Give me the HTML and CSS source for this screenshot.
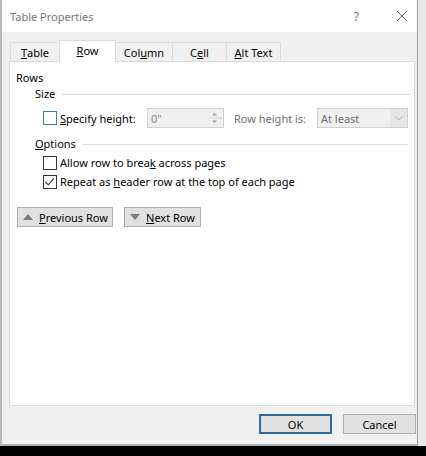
FILE: index.html
```html
<!DOCTYPE html>
<html>
<head>
<meta charset="utf-8">
<link rel="stylesheet" href="styles.css">
</head>
<body>
<div class="screen">
  <div class="window">
    <div class="titlebar">
      <span class="title">Table Properties</span>
      <div class="controls">
        <span class="help">?</span>
        <svg class="close" width="12" height="12" viewBox="0 0 12 12"><path d="M1 1L11 11M11 1L1 11" stroke="#666" stroke-width="1" fill="none"/></svg>
      </div>
    </div>
    <div class="body">
      <div class="tabs">
        <div class="tab"><u>T</u>able</div>
        <div class="tab active"><u>R</u>ow</div>
        <div class="tab">Col<u>u</u>mn</div>
        <div class="tab">C<u>e</u>ll</div>
        <div class="tab"><u>A</u>lt Text</div>
      </div>
      <div class="panel">
        <div class="heading">Rows</div>
        <div class="group">
          <div class="legend"><span>Size</span><div class="rule"></div></div>
          <div class="sizerow">
            <label class="check"><span class="box blue"></span><span><u>S</u>pecify height:</span></label>
            <div class="spin">
              <span class="spinval">0"</span>
              <div class="spinbtns">
                <svg width="17" height="18" viewBox="0 0 17 18"><path d="M6 6.5L8.5 4L11 6.5Z" fill="#9a9a9a"/><path d="M1 9H16" stroke="#d6d6d6"/><path d="M6 11.5L8.5 14L11 11.5Z" fill="#9a9a9a"/></svg>
              </div>
            </div>
            <span class="label2">Row height is:</span>
            <div class="select">
              <span class="selval">At least</span>
              <div class="selbtn"><svg width="10" height="6" viewBox="0 0 10 6"><path d="M1 1L5 5L9 1" stroke="#b5b5b5" fill="none"/></svg></div>
            </div>
          </div>
          <div class="legend opts"><span><u>O</u>ptions</span><div class="rule"></div></div>
          <label class="check opt"><span class="box"></span><span>Allow row to brea<u>k</u> across pages</span></label>
          <label class="check opt"><span class="box"><svg width="12" height="12" viewBox="0 0 12 12"><path d="M1.5 6L4.3 8.8L10 2.3" stroke="#333" stroke-width="1.1" fill="none"/></svg></span><span>Repeat as <u>h</u>eader row at the top of each page</span></label>
        </div>
        <div class="navrow">
          <div class="navbtn prev"><svg width="10" height="6" viewBox="0 0 10 6"><path d="M0 6L5 0L10 6Z" fill="#7a7a7a"/></svg><span><u>P</u>revious Row</span></div>
          <div class="navbtn next"><svg width="10" height="6" viewBox="0 0 10 6"><path d="M0 0L5 6L10 0Z" fill="#7a7a7a"/></svg><span><u>N</u>ext Row</span></div>
        </div>
      </div>
      <div class="footer">
        <div class="btn ok">OK</div>
        <div class="btn">Cancel</div>
      </div>
    </div>
  </div>
</div>
</body>
</html>
```
FILE: styles.css
```css
html, body {
  margin: 0;
  padding: 0;
  background: #000;
}
body {
  font-family: "Noto Sans", "Open Sans", sans-serif;
  font-size: 11px;
  color: #000;
  white-space: nowrap;
}
.screen {
  width: 426px;
  height: 446px;
  background: #e9e9e9;
}
.window {
  width: 415px;
  height: 444px;
  border-left: 2px solid #b9b9b9;
  border-right: 1px solid #9d9d9d;
  border-bottom: 2px solid #b3b3b3;
  background: #f0f0f0;
  display: flex;
  flex-direction: column;
}
.titlebar {
  height: 32px;
  background: #fff;
  display: flex;
  align-items: center;
  justify-content: space-between;
  padding-left: 8px;
}
.title {
  color: #777;
  font-size: 11px;
}
.controls {
  display: flex;
  align-items: center;
}
.help {
  color: #777;
  font-size: 12px;
  margin-right: 37px;
}
.close {
  margin-right: 9px;
}
.body {
  flex: 1;
  display: flex;
  flex-direction: column;
  padding: 7px 0 0 7px;
}
.tabs {
  display: flex;
  align-items: flex-end;
  height: 22px;
  padding-left: 1px;
  position: relative;
  z-index: 1;
}
.tab {
  height: 19px;
  box-sizing: border-box;
  border: 1px solid #d9d9d9;
  border-bottom: none;
  border-left: none;
  background: #f0f0f0;
  display: flex;
  align-items: center;
  justify-content: center;
}
.tab:nth-child(1) { width: 50px; border-left: 1px solid #d9d9d9; }
.tab:nth-child(2) { width: 56px; }
.tab:nth-child(3) { width: 57px; }
.tab:nth-child(4) { width: 54px; }
.tab:nth-child(5) { width: 54px; }
.tab.active {
  height: 22px;
  background: #fff;
  border-left: 1px solid #d9d9d9;
  margin-left: -1px;
  margin-bottom: -1px;
  padding-bottom: 3px;
  width: 57px;
}
.panel {
  width: 406px;
  height: 345px;
  box-sizing: border-box;
  background: #fff;
  border: 1px solid #d9d9d9;
  padding: 8px 0 0 6px;
}
.heading {
  line-height: 16px;
}
.group {
  padding-left: 19px;
}
.legend {
  display: flex;
  align-items: center;
  line-height: 16px;
}
.legend span {
  margin-right: 6px;
}
.rule {
  flex: none;
  width: 350px;
  height: 1px;
  background: #dcdcdc;
}
.legend.opts { margin-top: 8px; }
.legend.opts .rule { width: 326px; }
.sizerow {
  display: flex;
  align-items: center;
  height: 20px;
  margin-top: 6px;
}
.check {
  display: flex;
  align-items: center;
  padding-left: 8px;
}
.box {
  width: 12px;
  height: 12px;
  border: 1px solid #333;
  background: #fff;
  margin-right: 3px;
  display: flex;
  align-items: center;
  justify-content: center;
  flex: none;
}
.box.blue {
  border-color: #3f7fae;
}
.sizerow .check {
  width: 112px;
  box-sizing: border-box;
}
.spin {
  width: 77px;
  height: 20px;
  box-sizing: border-box;
  border: 1px solid #cfcfcf;
  background: #f0f0f0;
  display: flex;
  align-items: center;
  justify-content: space-between;
}
.spinval {
  color: #8a8a8a;
  padding-left: 3px;
}
.spinbtns {
  display: flex;
}
.label2 {
  color: #6d6d6d;
  margin-left: 10px;
  width: 83px;
}
.select {
  width: 91px;
  height: 20px;
  box-sizing: border-box;
  border: 1px solid #cfcfcf;
  background: #f0f0f0;
  display: flex;
  align-items: center;
  justify-content: space-between;
}
.selval {
  color: #6d6d6d;
  padding-left: 3px;
}
.selbtn {
  width: 17px;
  height: 18px;
  background: #e6e6e6;
  display: flex;
  align-items: center;
  justify-content: center;
}
.check.opt {
  line-height: 16px;
  margin-top: 3px;
}
.navrow {
  display: flex;
  margin-top: 17px;
  gap: 11px;
  padding-left: 1px;
}
.navbtn {
  height: 20px;
  box-sizing: border-box;
  border: 1px solid #adadad;
  background: #e1e1e1;
  display: flex;
  align-items: center;
  padding-left: 5px;
}
.navbtn svg { margin-right: 6px; }
.navbtn.prev { width: 96px; }
.navbtn.next { width: 77px; }
.footer {
  display: flex;
  justify-content: flex-end;
  gap: 11px;
  margin-top: 8px;
  padding-right: 1px;
}
.btn {
  width: 73px;
  height: 20px;
  box-sizing: border-box;
  border: 1px solid #adadad;
  background: #e1e1e1;
  display: flex;
  align-items: center;
  justify-content: center;
}
.btn.ok {
  border: 2px solid #2f6c9c;
}
```
